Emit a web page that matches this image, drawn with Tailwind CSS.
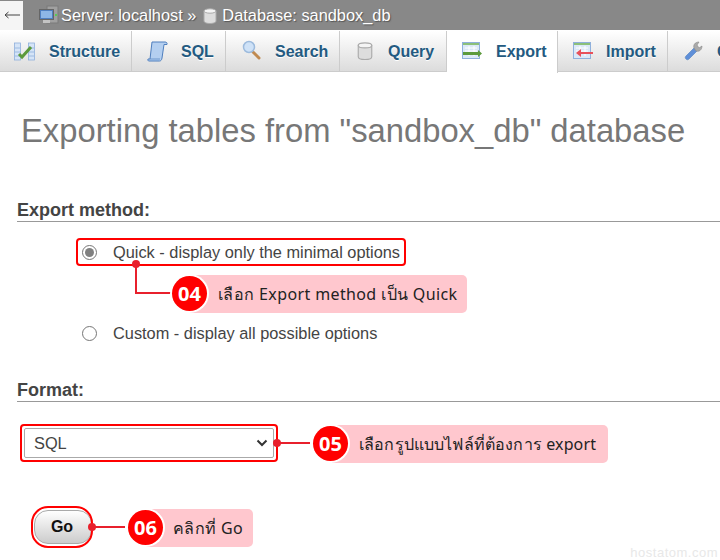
<!DOCTYPE html>
<html lang="en">
<head>
  <meta charset="UTF-8">
  <title>phpMyAdmin export</title>
  <script src="https://cdn.jsdelivr.net/npm/@tailwindcss/browser@4"></script>
</head>
<body class="bg-white font-['Liberation_Sans',Arial,sans-serif] text-[#444] overflow-hidden">
  <div class="relative w-[720px] h-[560px] overflow-hidden">
    <!-- breadcrumb -->
    <div class="h-[30px] bg-[#888] flex items-center text-white text-[16.35px] [text-shadow:1px_1px_1px_#555]">
      <div class="w-[23px] h-[29px] bg-[#f5f5f5] flex items-center justify-center">
        <svg class="w-[16px] h-[8px]" viewBox="0 0 16 8" aria-label="←"><path d="M1 4h15M4.500 1L1 4l3.500 3" fill="none" stroke="#444"/></svg>
      </div>
      <svg class="ml-[16px] w-[20px] h-[20px]" viewBox="0 0 20 20"><rect x="8" y="1" width="11" height="17" fill="#a0a0a0" stroke="#7a7a7a"/><rect x="0.500" y="4.500" width="14" height="10" fill="#4f7fc0" stroke="#666"/><rect x="2" y="6" width="11" height="7" fill="#8db6e6"/><rect x="4" y="15" width="7" height="3" fill="#c4c4c4"/><rect x="16" y="9" width="2" height="2" fill="#5c5"/></svg>
      <span class="ml-[2px]">Server: localhost »</span>
      <svg class="ml-[7px] w-[14px] h-[16px] mt-[1px]" viewBox="0 0 14 16"><path d="M1 3v10c0 1.500 2.500 2.500 6 2.500s6-1 6-2.500V3z" fill="#ddd" stroke="#aaa"/><ellipse cx="7" cy="3" rx="6" ry="2.200" fill="#f4f4f4" stroke="#aaa"/></svg>
      <span class="ml-[5px]">Database: sandbox_db</span>
    </div>
    <!-- tabs -->
    <div class="mt-px h-[41px] flex text-[16px] font-bold text-[#235a81] bg-gradient-to-b from-white to-[#dcdcdc] border-b border-[#ccc] [text-shadow:0_1px_0_#fff]">
      <div class="w-[132px] shrink-0 flex items-center border-r border-[#ccc] pl-[14px] pt-[2px]">
        <svg class="w-[21px] h-[19px] mb-[2px]" viewBox="0 0 21 19"><rect x="0.500" y="1" width="6" height="17" fill="#d5e4f7" stroke="#8fb0dc" stroke-width=".8"/><rect x="14.500" y="1" width="6" height="17" fill="#d5e4f7" stroke="#8fb0dc" stroke-width=".8"/><path d="M1 6h5M1 10h5M1 14h5M15 6h5M15 10h5M15 14h5" stroke="#8fb0dc" stroke-width=".8"/><path d="M5 12l3 3 9-10" fill="none" stroke="#5c9a3c" stroke-width="3"/></svg>
        <span class="ml-[14px]">Structure</span>
      </div>
      <div class="w-[94px] shrink-0 flex items-center border-r border-[#ccc] pl-[15px] pt-[2px]">
        <svg class="w-[21px] h-[21px] mb-[2px]" viewBox="0 0 21 21"><path d="M5 1h13c1.500 0 2.500 1 2 2.500h-3L15 17c-.3 2-1.200 3-2.500 3H2c-1 0-1.500-1-1-2h2z" fill="#b4cff0" stroke="#4f7fbe"/><path d="M3 18h10" stroke="#4f7fbe" stroke-width=".7"/></svg>
        <span class="ml-[13px]">SQL</span>
      </div>
      <div class="w-[114px] shrink-0 flex items-center border-r border-[#ccc] pl-[16px] pt-[2px]">
        <svg class="w-[19px] h-[20px] mb-[4px]" viewBox="0 0 19 20"><path d="M11 12l6 6" stroke="#c08a50" stroke-width="3" stroke-linecap="round"/><circle cx="7" cy="7" r="5.500" fill="#cfe2f7" stroke="#9dbbdd" stroke-width="1.500"/></svg>
        <span class="ml-[14px]">Search</span>
      </div>
      <div class="w-[107px] shrink-0 flex items-center border-r border-[#ccc] pl-[17px] pt-[2px]">
        <svg class="w-[16px] h-[18px] mb-[3px]" viewBox="0 0 14 16"><path d="M1 3v10c0 1.500 2.500 2.500 6 2.500s6-1 6-2.500V3z" fill="#ddd" stroke="#aaa"/><ellipse cx="7" cy="3" rx="6" ry="2.200" fill="#f4f4f4" stroke="#aaa"/></svg>
        <span class="ml-[15px]">Query</span>
      </div>
      <div class="w-[111px] shrink-0 flex items-center border-r border-[#ccc] bg-white h-[42px] pl-[15px]">
        <svg class="w-[20px] h-[18px] mb-[2px]" viewBox="0 0 20 18"><rect x="0.500" y="0.500" width="17" height="16" fill="#dbe8f7" stroke="#8fb0dc"/><rect x="1" y="1" width="16" height="2" fill="#8cc07a"/><path d="M3 6h12M3 9h12M7 4v10M12 4v10" stroke="#fff"/><path d="M1 10h15V8l4 3.500-4 3.500v-2H1z" fill="#5c9a3c"/></svg>
        <span class="ml-[14px]">Export</span>
      </div>
      <div class="w-[110px] shrink-0 flex items-center border-r border-[#ccc] pl-[15px] pt-[2px]">
        <svg class="w-[20px] h-[18px] mb-[3px]" viewBox="0 0 20 18"><rect x="0.500" y="0.500" width="17" height="16" fill="#dbe8f7" stroke="#8fb0dc"/><rect x="1" y="1" width="16" height="2" fill="#8cc07a"/><path d="M3 6h12M3 9h12M7 4v10M12 4v10" stroke="#fff"/><path d="M20 10H8V7l-5 4 5 4v-3h12z" fill="#e8505a"/></svg>
        <span class="ml-[13px]">Import</span>
      </div>
      <div class="flex-1 flex items-center pl-[16px] pt-[2px]">
        <svg class="w-[20px] h-[20px] shrink-0 mb-[3px]" viewBox="0 0 20 20"><path d="M2 15l8-8 3 3-8 8c-1 1-2 1-3 0s-1-2 0-3z" fill="#5f8fd8" stroke="#4f7fbe" stroke-width=".6"/><path d="M10 7c-1-3 1-6 5-6l-2 3 2 3 3-2c0 4-3 6-6 5z" fill="#aaa" stroke="#888" stroke-width=".6"/></svg>
        <span class="ml-[13px] whitespace-nowrap">Operations</span>
      </div>
    </div>
    <!-- page -->
    <h2 class="mt-[39px] ml-[21px] text-[32.75px] leading-[40px] text-[#777] font-normal whitespace-nowrap">Exporting tables from "sandbox_db" database</h2>

    <section class="mt-[48px] ml-[17px]">
      <h3 class="text-[18px] leading-[22px] font-bold border-b border-[#999] h-[23px]">Export method:</h3>
      <div class="mt-[21px] ml-[65px] flex flex-col gap-[63px] text-[16.35px] leading-[18px]">
        <label class="flex items-center">
          <span class="w-[15px] h-[15px] rounded-full border border-[#767676] flex items-center justify-center"><span class="w-[9px] h-[9px] rounded-full bg-[#808080]"></span></span>
          <span class="ml-[16px]">Quick - display only the minimal options</span>
        </label>
        <label class="flex items-center">
          <span class="w-[15px] h-[15px] rounded-full border border-[#767676]"></span>
          <span class="ml-[16px]">Custom - display all possible options</span>
        </label>
      </div>
    </section>

    <section class="mt-[37px] ml-[17px]">
      <h3 class="text-[18px] leading-[22px] font-bold border-b border-[#999] h-[23px]">Format:</h3>
      <div class="mt-[26px] ml-[7px] w-[250px] h-[30px] border border-[#aaa] rounded-[2px] flex items-center justify-between pl-[9px] pr-[5px] text-[16.35px]">
        <span>SQL</span>
        <svg class="w-[12px] h-[8px]" viewBox="0 0 12 8"><path d="M1.500 1.500L6 6l4.500-4.500" fill="none" stroke="#333" stroke-width="2"/></svg>
      </div>
      <div class="mt-[52px] ml-[17px] w-[58px] h-[34px] rounded-[14px] border border-[#aaa] bg-gradient-to-b from-white to-[#ccc] flex items-center justify-center pr-[2px] text-[16px] font-bold text-[#111]">Go</div>
    </section>

    <!-- annotations -->
    <div class="absolute left-[76px] top-[238px] w-[330px] h-[28px] border-2 border-[#f00] rounded-[4px]"></div>
    <div class="absolute left-[132px] top-[260px] w-[8px] h-[8px] rounded-full bg-[#e8202c]"></div>
    <div class="absolute left-[135px] top-[267px] w-[38px] h-[27px] border-l-2 border-b-2 border-[#e8202c]"></div>
    <div class="absolute left-[190px] top-[275px] h-[38px] w-[277px] bg-[#ffc7ce] rounded-r-[5px] flex items-center pl-[28px] text-[16px] tracking-[0.38px] text-[#222] whitespace-nowrap font-['Noto_Sans',sans-serif]">เลือก Export method เป็น Quick</div>
    <div class="absolute left-[172px] top-[276px] w-[35px] h-[35px] rounded-full bg-[#f00] ring-2 ring-white flex items-center justify-center text-white font-bold text-[20px] font-['Open_Sans',sans-serif]">04</div>

    <div class="absolute left-[20px] top-[424px] w-[258px] h-[38px] border-2 border-[#f00] rounded-[4px]"></div>
    <div class="absolute left-[273px] top-[439px] w-[8px] h-[8px] rounded-full bg-[#e8202c]"></div>
    <div class="absolute left-[280px] top-[442px] w-[30px] h-[2px] bg-[#e8202c]"></div>
    <div class="absolute left-[332px] top-[425px] h-[38px] w-[276px] bg-[#ffc7ce] rounded-r-[5px] flex items-center pl-[27px] text-[16px] tracking-[0.15px] text-[#222] whitespace-nowrap font-['Noto_Sans',sans-serif]">เลือกรูปแบบไฟล์ที่ต้องการ export</div>
    <div class="absolute left-[313px] top-[426px] w-[35px] h-[35px] rounded-full bg-[#f00] ring-2 ring-white flex items-center justify-center text-white font-bold text-[20px] font-['Open_Sans',sans-serif]">05</div>

    <div class="absolute left-[31px] top-[506px] w-[62px] h-[42px] border-2 border-[#f00] rounded-[17px]"></div>
    <div class="absolute left-[88px] top-[523px] w-[8px] h-[8px] rounded-full bg-[#e8202c]"></div>
    <div class="absolute left-[95px] top-[526px] w-[30px] h-[2px] bg-[#e8202c]"></div>
    <div class="absolute left-[146px] top-[509px] h-[38px] w-[107px] bg-[#ffc7ce] rounded-r-[5px] flex items-center pl-[27px] text-[16px] tracking-[0.35px] text-[#222] whitespace-nowrap font-['Noto_Sans',sans-serif]">คลิกที่ Go</div>
    <div class="absolute left-[128px] top-[510px] w-[35px] h-[35px] rounded-full bg-[#f00] ring-2 ring-white flex items-center justify-center text-white font-bold text-[20px] font-['Open_Sans',sans-serif]">06</div>

    <div class="absolute right-[2px] top-[543px] text-[13px] tracking-[0.5px] text-[#e8e8e8]">hostatom.com</div>
  </div>
</body>
</html>
